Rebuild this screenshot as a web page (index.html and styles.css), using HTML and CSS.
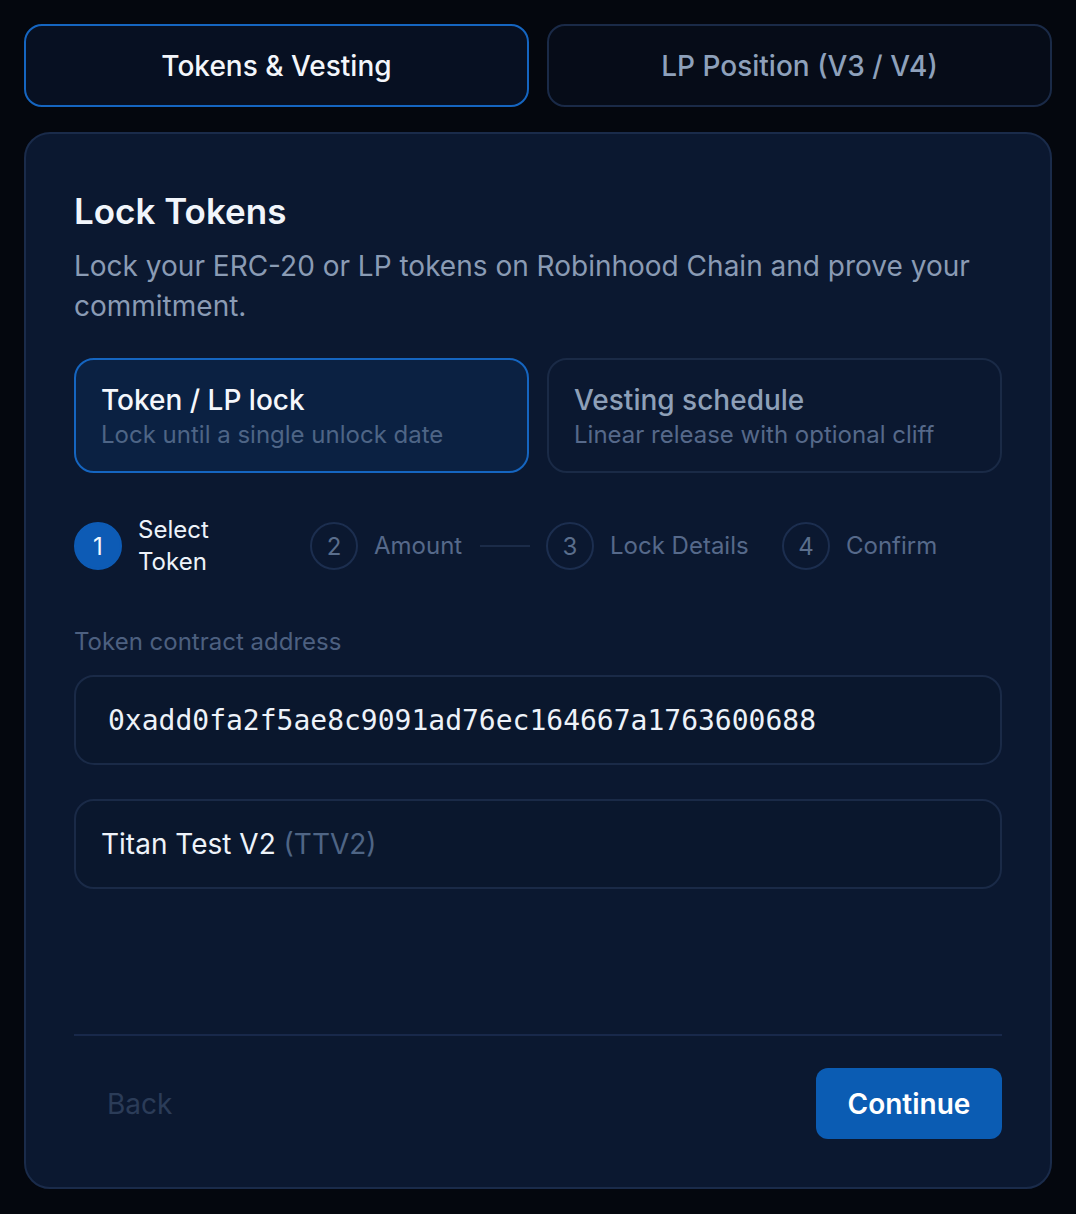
FILE: index.html
```html
<!DOCTYPE html>
<html lang="en">
<head>
<meta charset="utf-8">
<title>Lock Tokens</title>
<link rel="stylesheet" href="styles.css">
</head>
<body>
<div class="page">
  <div class="tabs">
    <button class="tab tab-active">Tokens &amp; Vesting</button>
    <button class="tab">LP Position (V3 / V4)</button>
  </div>

  <section class="card">
    <h1 class="title">Lock Tokens</h1>
    <p class="desc">Lock your ERC-20 or LP tokens on Robinhood Chain and prove your commitment.</p>

    <div class="modes">
      <div class="mode mode-active">
        <div class="mode-title">Token / LP lock</div>
        <div class="mode-sub">Lock until a single unlock date</div>
      </div>
      <div class="mode">
        <div class="mode-title">Vesting schedule</div>
        <div class="mode-sub">Linear release with optional cliff</div>
      </div>
    </div>

    <div class="steps">
      <div class="step step-current">
        <span class="step-num">1</span>
        <span class="step-label step-label-narrow">Select Token</span>
      </div>
      <div class="step">
        <span class="step-num">2</span>
        <span class="step-label">Amount</span>
        <span class="step-line"></span>
      </div>
      <div class="step">
        <span class="step-num">3</span>
        <span class="step-label">Lock Details</span>
        <span class="step-line"></span>
      </div>
      <div class="step">
        <span class="step-num">4</span>
        <span class="step-label">Confirm</span>
      </div>
    </div>

    <label class="field-label">Token contract address</label>
    <div class="input mono">0xadd0fa2f5ae8c9091ad76ec164667a1763600688</div>
    <div class="input token-info">Titan Test V2 <span class="symbol">(TTV2)</span></div>

    <div class="footer">
      <button class="btn-back">Back</button>
      <button class="btn-continue">Continue</button>
    </div>
  </section>
</div>
</body>
</html>
```

FILE: styles.css
```css
* { box-sizing: border-box; }

html, body {
  margin: 0;
  background: #04070e;
}

body {
  font-family: Inter, "Noto Sans", "Liberation Sans", sans-serif;
  color: #eef3fa;
}

.page {
  padding: 24px;
}

.tabs {
  display: grid;
  grid-template-columns: 1fr 1fr;
  gap: 18px;
}

.tab {
  height: 83px;
  border-radius: 18px;
  border: 2px solid #1a2a47;
  background: #060c18;
  color: #8ea1bb;
  font-family: inherit;
  font-size: 28px;
  font-weight: 500;
}

.tab-active {
  border-color: #1565c0;
  color: #f3f6fb;
  background: #071022;
}

.card {
  margin-top: 25px;
  border: 2px solid #1a2b4a;
  border-radius: 26px;
  background: #0b1830;
  padding: 56px 48px 48px 48px;
}

.title {
  margin: 0;
  font-size: 35px;
  font-weight: 600;
  line-height: 42px;
  color: #f1f5fb;
}

.desc {
  margin: 14px 0 0;
  font-size: 28px;
  line-height: 40px;
  color: #8a9bb4;
}

.modes {
  margin-top: 32px;
  display: grid;
  grid-template-columns: 1fr 1fr;
  gap: 18px;
}

.mode {
  height: 115px;
  border: 2px solid #1a2a46;
  border-radius: 20px;
  padding: 22px 25px 20px;
}

.mode-active {
  border-color: #1565c0;
  background: #0b2142;
}

.mode-title {
  font-size: 28px;
  line-height: 36px;
  font-weight: 500;
  color: #8ea0b8;
}

.mode-sub {
  font-size: 24px;
  line-height: 34px;
  color: #56698a;
}

.mode-active .mode-title { color: #f4f7fc; }
.mode-active .mode-sub { color: #4e6586; }

.steps {
  margin-top: 41px;
  display: grid;
  grid-template-columns: repeat(4, 220px);
  gap: 16px;
  height: 64px;
}

.step {
  display: flex;
  align-items: center;
  gap: 16px;
}

.step-num {
  flex: none;
  width: 48px;
  height: 48px;
  border-radius: 50%;
  border: 2px solid #1c2e4f;
  display: flex;
  align-items: center;
  justify-content: center;
  font-size: 24px;
  color: #5a6e8c;
}

.step-current .step-num {
  background: #0d5bb5;
  border-color: #0d5bb5;
  color: #f4f8fd;
}

.step-label {
  font-size: 24px;
  line-height: 32px;
  color: #56698a;
  white-space: nowrap;
}

.step-label-narrow {
  white-space: normal;
  width: 90px;
}

.step-current .step-label { color: #eef3fa; }

.step-line {
  flex: 1;
  height: 2px;
  background: #1b2b48;
  margin-left: 2px;
}

.field-label {
  display: block;
  margin-top: 48px;
  font-size: 24px;
  line-height: 32px;
  color: #4d6080;
}

.input {
  margin-top: 17px;
  height: 90px;
  border: 2px solid #1a2a47;
  border-radius: 20px;
  background: #0a172d;
  display: flex;
  align-items: center;
  padding: 0 25px;
  font-size: 28px;
  color: #eef3fa;
}

.mono {
  font-family: "DejaVu Sans Mono", "Liberation Mono", monospace;
  font-size: 28px;
  padding-left: 32px;
  color: #edf2f9;
}

.token-info {
  margin-top: 34px;
  white-space: pre;
}

.symbol { color: #4f6585; }

.footer {
  margin-top: 145px;
  border-top: 2px solid #18284a;
  padding-top: 32px;
  display: flex;
  justify-content: space-between;
  align-items: center;
}

.btn-back {
  background: transparent;
  border: none;
  font-family: inherit;
  font-size: 28px;
  color: #2b3c58;
  padding: 0 33px;
  height: 71px;
}

.btn-continue {
  width: 186px;
  height: 71px;
  border: none;
  border-radius: 12px;
  background: #0b5cb3;
  color: #ffffff;
  font-family: inherit;
  font-size: 28px;
  font-weight: 600;
}
```
